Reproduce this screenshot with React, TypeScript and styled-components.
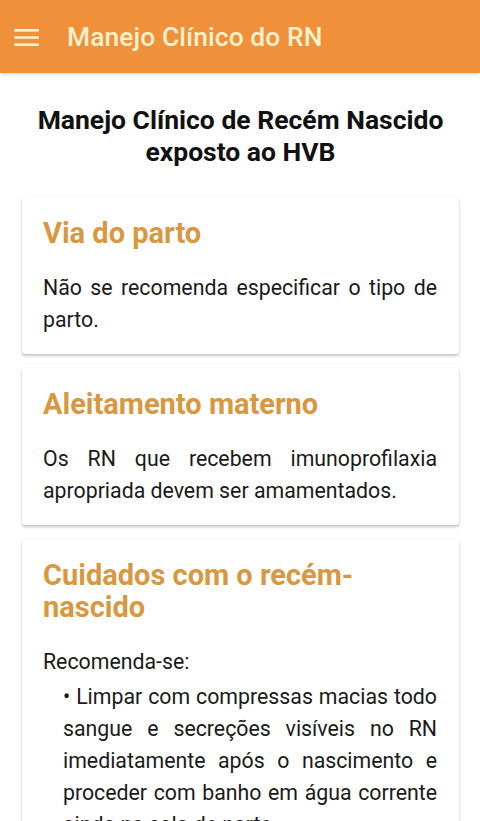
import styled, { createGlobalStyle } from 'styled-components';

const GlobalStyle = createGlobalStyle`
  html, body {
    margin: 0;
    padding: 0;
    background: #ffffff;
    font-family: Roboto, 'Noto Sans', Arial, sans-serif;
  }
  * {
    box-sizing: border-box;
  }
`;

const Page = styled.div`
  width: 480px;
  min-height: 821px;
  background: #ffffff;
`;

const AppBar = styled.header`
  height: 73px;
  background-color: #f0903a;
  display: flex;
  align-items: center;
  padding: 0 14px;
  gap: 28px;
  box-shadow: 0 2px 4px rgba(0, 0, 0, 0.12);
`;

const MenuIcon = styled.svg`
  width: 25px;
  height: 17px;
  flex-shrink: 0;
  margin-top: 2px;
`;

const AppTitle = styled.h1`
  margin: 0;
  font-size: 26.4px;
  font-weight: 500;
  color: #fff1cc;
  letter-spacing: 0.1px;
  margin-top: 1px;
`;

const Content = styled.main`
  padding: 31px 21px 0 22px;
  display: flex;
  flex-direction: column;
  gap: 14px;
`;

const PageTitle = styled.h2`
  margin: 0 0 15px;
  text-align: center;
  font-size: 26.5px;
  font-weight: 700;
  line-height: 32px;
  color: #111111;
`;

const Card = styled.section`
  background: #ffffff;
  border-radius: 3px;
  padding: 20px 22px 18px 21px;
  box-shadow: 0 2px 3px rgba(0, 0, 0, 0.22), 0 0 2px rgba(0, 0, 0, 0.08);
`;

const CardTitle = styled.h3`
  margin: 0 0 23px;
  font-size: 29px;
  font-weight: 700;
  line-height: 32px;
  color: #d9973f;
`;

const Paragraph = styled.p<{ $indent?: boolean }>`
  margin: ${({ $indent }) => ($indent ? '3px 0 0' : '0')};
  padding-left: ${({ $indent }) => ($indent ? '20px' : '0')};
  font-size: 21.3px;
  line-height: 32px;
  color: #1a1a1a;
  text-align: justify;
`;

export default function App() {
  return (
    <Page>
      <GlobalStyle />
      <AppBar>
        <MenuIcon viewBox="0 0 25 17">
          <rect x="0" y="0" width="25" height="2.6" fill="#fff1cc" />
          <rect x="0" y="7.2" width="25" height="2.6" fill="#fff1cc" />
          <rect x="0" y="14.4" width="25" height="2.6" fill="#fff1cc" />
        </MenuIcon>
        <AppTitle>Manejo Clínico do RN</AppTitle>
      </AppBar>
      <Content>
        <PageTitle>
          Manejo Clínico de Recém Nascido
          <br />
          exposto ao HVB
        </PageTitle>
        <Card>
          <CardTitle>Via do parto</CardTitle>
          <Paragraph>Não se recomenda especificar o tipo de parto.</Paragraph>
        </Card>
        <Card>
          <CardTitle>Aleitamento materno</CardTitle>
          <Paragraph>Os RN que recebem imunoprofilaxia apropriada devem ser amamentados.</Paragraph>
        </Card>
        <Card>
          <CardTitle>Cuidados com o recém-nascido</CardTitle>
          <Paragraph>Recomenda-se:</Paragraph>
          <Paragraph $indent>
            • Limpar com compressas macias todo sangue e secreções visíveis no RN imediatamente após o
            nascimento e proceder com banho em água corrente ainda na sala de parto.
          </Paragraph>
        </Card>
      </Content>
    </Page>
  );
}
